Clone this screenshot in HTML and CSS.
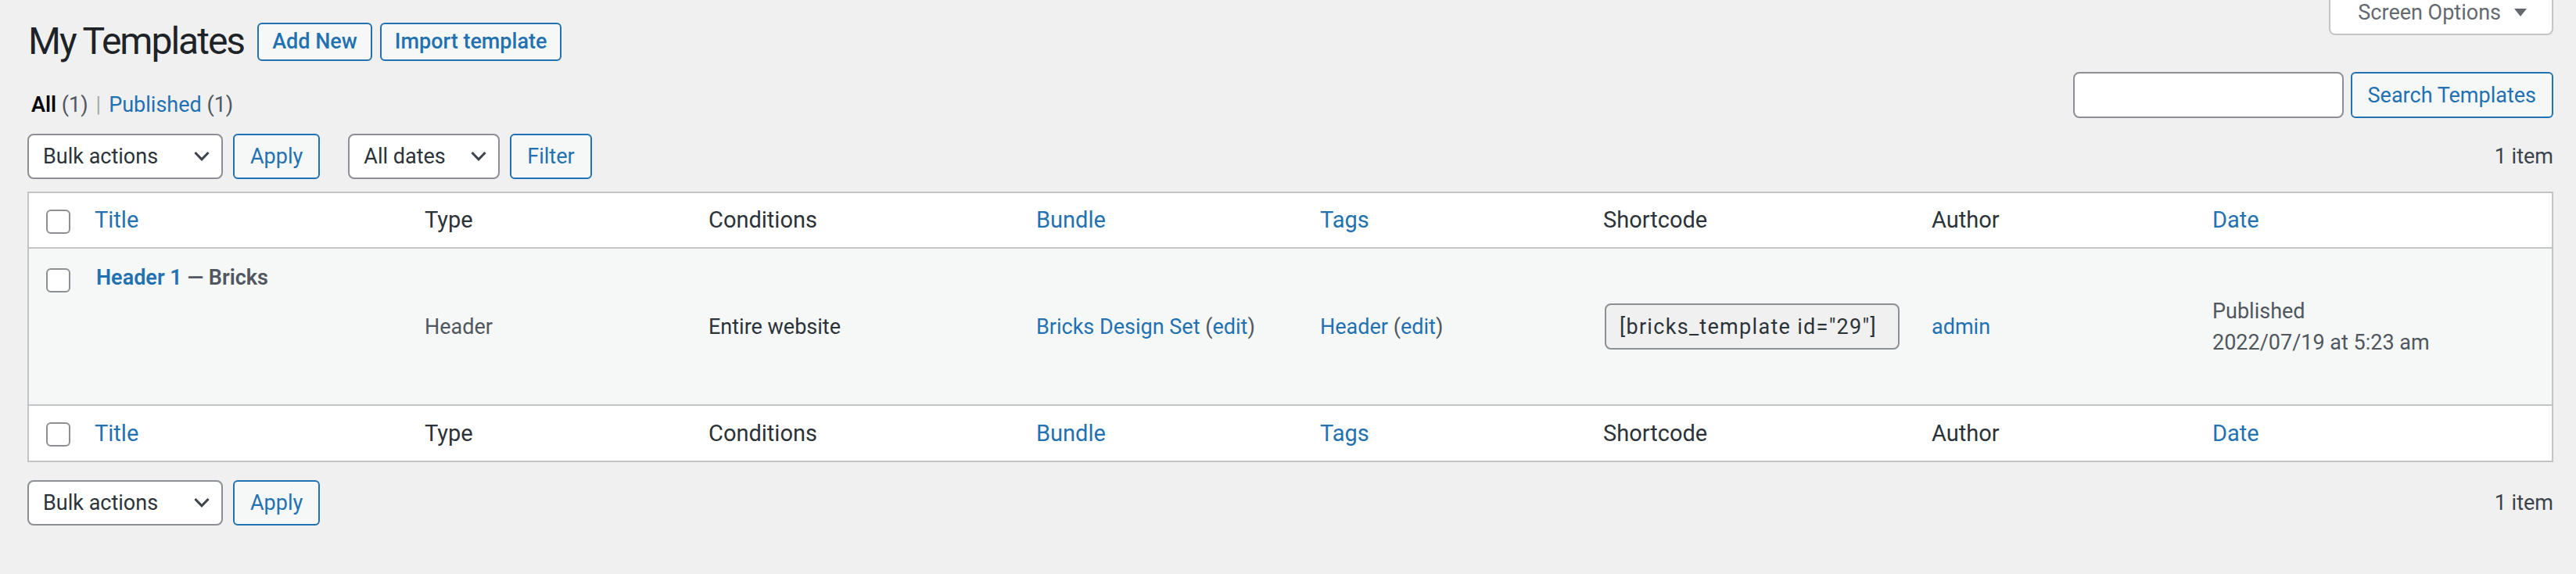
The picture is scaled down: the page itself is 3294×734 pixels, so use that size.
FILE: index.html
```html
<!DOCTYPE html>
<html lang="en">
<head>
<meta charset="UTF-8">
<title>My Templates</title>
<link rel="stylesheet" href="styles.css">
</head>
<body>

<div class="wrap">
    <div class="pageHead">
        <div class="titleGroup">
            <h1>My Templates</h1>
            <a class="titleBtn" href="#">Add New</a>
            <a class="titleBtn" href="#">Import template</a>
        </div>
        <button class="screenOptions" type="button">Screen Options
            <svg width="16" height="10" viewBox="0 0 16 10"><polygon points="0,0 16,0 8,10" fill="#646970"/></svg>
        </button>
    </div>

    <div class="filterHead">
        <ul class="subsubsub">
            <li class="current">All <span class="count">(1)</span></li>
            <li class="sep">|</li>
            <li><a href="#">Published</a> <span class="count">(1)</span></li>
        </ul>
        <div class="searchBox">
            <input type="search" class="searchInput">
            <button type="button" class="btn">Search Templates</button>
        </div>
    </div>

    <div class="tablenav">
        <div class="actions">
            <label class="selectWrap bulk">
                <select><option>Bulk actions</option></select>
                <svg class="chevron" width="30" height="30" viewBox="0 0 20 20"><polyline points="4.3,6.7 10,12.6 15.7,6.7" fill="none" stroke="#3c434a" stroke-width="2"/></svg>
            </label>
            <button type="button" class="btn">Apply</button>
            <label class="selectWrap dates">
                <select><option>All dates</option></select>
                <svg class="chevron" width="30" height="30" viewBox="0 0 20 20"><polyline points="4.3,6.7 10,12.6 15.7,6.7" fill="none" stroke="#3c434a" stroke-width="2"/></svg>
            </label>
            <button type="button" class="btn">Filter</button>
        </div>
        <span class="displayingNum">1 item</span>
    </div>

    <table class="listTable">
        <colgroup>
            <col style="width: 63px">
            <col style="width: 422px">
            <col style="width: 363px">
            <col style="width: 419px">
            <col style="width: 363px">
            <col style="width: 362px">
            <col style="width: 420px">
            <col style="width: 359px">
            <col style="width: 455px">
        </colgroup>
        <thead>
            <tr>
                <th class="checkCol"><input type="checkbox" class="cb"></th>
                <th><a href="#">Title</a></th>
                <th>Type</th>
                <th>Conditions</th>
                <th><a href="#">Bundle</a></th>
                <th><a href="#">Tags</a></th>
                <th>Shortcode</th>
                <th>Author</th>
                <th><a href="#">Date</a></th>
            </tr>
        </thead>
        <tbody>
            <tr class="row">
                <td class="checkCol"><input type="checkbox" class="cb"></td>
                <td class="titleCell"><strong class="rowTitle"><a href="#">Header 1</a> — Bricks</strong></td>
                <td>Header</td>
                <td class="dark">Entire website</td>
                <td><a href="#">Bricks Design Set</a> (<a href="#">edit</a>)</td>
                <td><a href="#">Header</a> (<a href="#">edit</a>)</td>
                <td><input type="text" class="shortcode" value='[bricks_template id="29"]' readonly></td>
                <td><a href="#">admin</a></td>
                <td>Published<br>2022/07/19 at 5:23 am</td>
            </tr>
        </tbody>
        <tfoot>
            <tr>
                <th class="checkCol"><input type="checkbox" class="cb"></th>
                <th><a href="#">Title</a></th>
                <th>Type</th>
                <th>Conditions</th>
                <th><a href="#">Bundle</a></th>
                <th><a href="#">Tags</a></th>
                <th>Shortcode</th>
                <th>Author</th>
                <th><a href="#">Date</a></th>
            </tr>
        </tfoot>
    </table>

    <div class="tablenav bottom">
        <div class="actions">
            <label class="selectWrap bulk">
                <select><option>Bulk actions</option></select>
                <svg class="chevron" width="30" height="30" viewBox="0 0 20 20"><polyline points="4.3,6.7 10,12.6 15.7,6.7" fill="none" stroke="#3c434a" stroke-width="2"/></svg>
            </label>
            <button type="button" class="btn">Apply</button>
        </div>
        <span class="displayingNum">1 item</span>
    </div>
</div>

</body>
</html>
```

FILE: styles.css
```css
body {
    margin: 0;
    background: #f0f0f1;
    color: #3c434a;
    font-family: Roboto, "Liberation Sans", sans-serif;
    font-size: 27px;
    line-height: 40px;
}

a {
    color: #2271b1;
    text-decoration: none;
}

.wrap {
    padding: 0 29px 0 35px;
}

/* page title row */
.pageHead {
    display: flex;
    justify-content: space-between;
    align-items: flex-start;
}

.titleGroup {
    display: flex;
    align-items: center;
    padding-top: 22px;
}

h1 {
    margin: 0 17px 0 1px;
    font-size: 48px;
    font-weight: 400;
    line-height: 62px;
    letter-spacing: -2px;
    color: #1d2327;
}

.titleBtn {
    display: inline-block;
    height: 49px;
    box-sizing: border-box;
    margin-right: 10px;
    padding: 0 17px;
    border: 2px solid #2271b1;
    border-radius: 6px;
    background: #f6f7f7;
    font-size: 27px;
    font-weight: 500;
    line-height: 45px;
}

.screenOptions {
    display: flex;
    align-items: center;
    gap: 17px;
    margin-top: -4px;
    padding: 0 32px 7px 35px;
    border: 2px solid #c3c4c7;
    border-top: none;
    border-radius: 0 0 8px 8px;
    background: #fff;
    color: #646970;
    font-family: inherit;
    font-size: 27px;
    line-height: 40px;
}

/* views + search */
.filterHead {
    display: flex;
    justify-content: space-between;
    align-items: flex-start;
    margin-top: 8px;
}

.subsubsub {
    display: flex;
    gap: 8px;
    margin: 0;
    padding: 22px 0 0 5px;
    list-style: none;
    color: #50575e;
}

.subsubsub .current {
    color: #000;
    font-weight: 600;
}

.subsubsub .current .count {
    font-weight: 400;
    color: #50575e;
}

.subsubsub .sep {
    color: #a7aaad;
    padding: 0 2px;
}

.searchBox {
    display: flex;
    gap: 9px;
}

.searchInput {
    width: 346px;
    height: 59px;
    box-sizing: border-box;
    border: 2px solid #8c8f94;
    border-radius: 8px;
    background: #fff;
}

.btn {
    height: 58px;
    box-sizing: border-box;
    padding: 0 20px;
    border: 2px solid #2271b1;
    border-radius: 6px;
    background: #f6f7f7;
    color: #2271b1;
    font-family: inherit;
    font-size: 27px;
}

.searchBox .btn {
    height: 59px;
}

/* table navigation */
.tablenav {
    display: flex;
    justify-content: space-between;
    align-items: center;
    height: 58px;
    margin-top: 17px;
}

.tablenav.bottom {
    margin-top: 23px;
}

.actions {
    display: flex;
    align-items: center;
    gap: 13px;
}

.selectWrap {
    position: relative;
    display: block;
}

.selectWrap select {
    display: block;
    height: 58px;
    box-sizing: border-box;
    padding: 0 0 0 18px;
    border: 2px solid #8c8f94;
    border-radius: 8px;
    background: #fff;
    color: #2c3338;
    font-family: inherit;
    font-size: 27px;
    appearance: none;
    -webkit-appearance: none;
}

.selectWrap.bulk select {
    width: 250px;
}

.selectWrap.dates {
    margin-left: 23px;
}

.selectWrap.dates select {
    width: 194px;
}

.chevron {
    position: absolute;
    right: 12px;
    top: 14px;
    pointer-events: none;
}

.displayingNum {
    color: #3c434a;
}

/* list table */
.listTable {
    width: 100%;
    margin-top: 16px;
    table-layout: fixed;
    border-collapse: separate;
    border-spacing: 0;
    border: 2px solid #c3c4c7;
    background: #fff;
}

.listTable th,
.listTable td {
    padding: 0 21px;
    text-align: left;
    white-space: nowrap;
}

.listTable th {
    font-size: 29px;
    font-weight: 400;
    color: #2c3338;
}

.listTable thead th {
    line-height: 69px;
    border-bottom: 2px solid #c3c4c7;
}

.listTable tfoot th {
    line-height: 70px;
    border-top: 2px solid #c3c4c7;
}

.listTable .checkCol {
    padding: 0 0 0 22px;
    vertical-align: middle;
}

.cb {
    display: block;
    width: 31px;
    height: 31px;
    margin: 3px 0 0;
    box-sizing: border-box;
    border: 2px solid #8c8f94;
    border-radius: 6px;
    background: #fff;
    appearance: none;
    -webkit-appearance: none;
}

.row {
    height: 199px;
    background: #f6f7f7;
}

.row td {
    vertical-align: middle;
    color: #50575e;
}

.row td.checkCol {
    vertical-align: top;
    padding-top: 25px;
}

.row td.checkCol .cb {
    margin: 0;
}

.row td.titleCell {
    vertical-align: top;
    padding-top: 17px;
    padding-left: 23px;
}

.rowTitle {
    font-weight: 600;
    color: #50575e;
}

.row td.dark {
    color: #2c3338;
}

.shortcode {
    display: block;
    width: 377px;
    height: 59px;
    box-sizing: border-box;
    margin-left: 2px;
    padding: 0 17px;
    border: 2px solid #8c8f94;
    border-radius: 8px;
    background: #f0f0f1;
    color: #2c3338;
    font-family: inherit;
    font-size: 27px;
    letter-spacing: 1.3px;
}
```
